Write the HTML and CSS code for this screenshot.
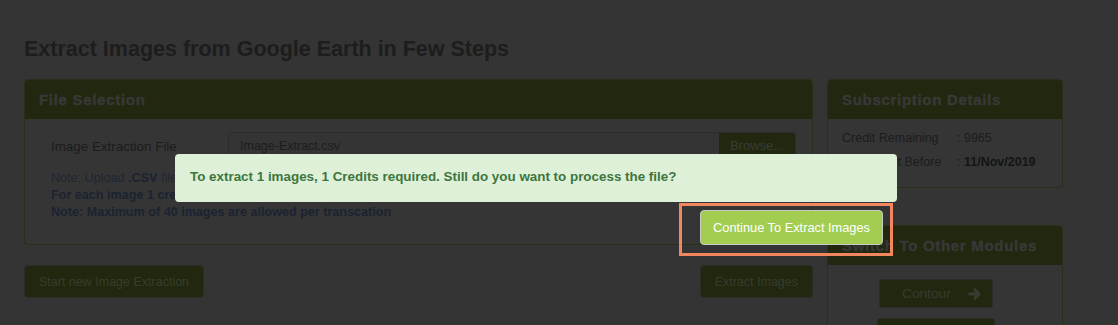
FILE: index.html
```html
<!DOCTYPE html>
<html lang="en">
<head>
<meta charset="utf-8">
<title>Extract Images</title>
<link rel="stylesheet" href="styles.css">
</head>
<body>
<div class="page">
  <h1 class="title">Extract Images from Google Earth in Few Steps</h1>
  <div class="layout">
    <main class="main-col">
      <section class="panel">
        <header class="panel-head">File Selection</header>
        <div class="file-body">
          <div class="file-row">
            <span class="file-label">Image Extraction File</span>
            <div class="file-input">
              <span class="file-name">Image-Extract.csv</span>
              <span class="browse">Browse...</span>
            </div>
          </div>
          <div class="notes">
            <p class="note">Note: Upload <b>.CSV</b> file format only.</p>
            <p class="note strong">For each image 1 credit will be deducted.</p>
            <p class="note strong">Note: Maximum of 40 images are allowed per transcation</p>
          </div>
        </div>
      </section>
      <div class="actions">
        <button class="btn">Start new Image Extraction</button>
        <button class="btn">Extract Images</button>
      </div>
    </main>
    <aside class="side-col">
      <section class="panel">
        <header class="panel-head">Subscription Details</header>
        <div class="sub-body">
          <span>Credit Remaining</span><span>: 9965</span>
          <span>Use Credit Before</span><span>: <b>11/Nov/2019</b></span>
        </div>
      </section>
      <section class="panel modules">
        <header class="panel-head">Switch To Other Modules</header>
        <div class="modules-body">
          <button class="mod-btn">Contour <svg class="arrow" viewBox="0 0 14 14" width="14" height="14"><path d="M1.5 7h9M6.8 2.6L11.2 7 6.8 11.4" fill="none" stroke="currentColor" stroke-width="2.8" stroke-linecap="round" stroke-linejoin="round"/></svg></button>
          <button class="mod-btn wide">Elevation <svg class="arrow" viewBox="0 0 14 14" width="14" height="14"><path d="M1.5 7h9M6.8 2.6L11.2 7 6.8 11.4" fill="none" stroke="currentColor" stroke-width="2.8" stroke-linecap="round" stroke-linejoin="round"/></svg></button>
        </div>
      </section>
    </aside>
  </div>
</div>

<div class="modal">
  <div class="modal-msg">To extract 1 images, 1 Credits required. Still do you want to process the file?</div>
  <div class="modal-foot">
    <div class="highlight">
      <button class="btn-continue">Continue To Extract Images</button>
    </div>
  </div>
</div>
</body>
</html>
```

FILE: styles.css
```css
* { box-sizing: border-box; }

html, body {
  margin: 0;
  padding: 0;
  background: #343434;
  font-family: "Liberation Sans", Arial, sans-serif;
  overflow: hidden;
}

.page {
  padding: 0 0 0 24px;
}

.title {
  margin: 37px 0 17px;
  font-size: 21.5px;
  line-height: 25px;
  font-weight: bold;
  color: #1d1d1d;
}

.layout {
  display: flex;
  gap: 14px;
  align-items: flex-start;
}

.main-col {
  width: 789px;
}

.side-col {
  width: 236px;
  display: flex;
  flex-direction: column;
  gap: 37px;
}

.panel {
  border: 1px solid #283015;
  border-radius: 4px;
  background: #353535;
  overflow: hidden;
}

.panel-head {
  height: 39px;
  line-height: 39px;
  padding-left: 14px;
  background: #21280f;
  color: #383838;
  font-size: 15px;
  font-weight: bold;
  letter-spacing: 0.7px;
  -webkit-text-stroke: 0.35px #383838;
}

/* File selection */
.file-body {
  padding: 13px 16px 23px 26px;
}

.file-row {
  display: flex;
  align-items: center;
}

.file-label {
  width: 177px;
  font-size: 13.4px;
  color: #1c1c1c;
}

.file-input {
  flex: 1;
  display: flex;
  height: 28px;
  border: 1px solid #2c2c2c;
  border-radius: 3px;
  overflow: hidden;
}

.file-name {
  flex: 1;
  padding-left: 11px;
  line-height: 26px;
  font-size: 12.5px;
  color: #1e1e1e;
  background: #343434;
}

.browse {
  width: 76px;
  text-align: center;
  line-height: 26px;
  font-size: 13px;
  color: #393c35;
  background: #21280f;
}

.notes {
  margin-top: 10px;
}

.note {
  margin: 0;
  font-size: 12.6px;
  line-height: 17px;
  color: #1f2733;
}

.note b,
.note.strong {
  font-weight: bold;
  color: #1b2332;
}

.actions {
  display: flex;
  justify-content: space-between;
  margin-top: 20px;
}

.btn {
  height: 33px;
  padding: 0 14px;
  border: 1px solid #2a2d25;
  border-radius: 4px;
  background: #21280f;
  color: #373d2e;
  font-family: "Liberation Sans", Arial, sans-serif;
  font-size: 12.5px;
}

/* Subscription */
.sub-body {
  display: grid;
  grid-template-columns: 115px auto;
  padding: 8px 14px 13px 14px;
  font-size: 12.5px;
  line-height: 23.5px;
  color: #1c1c1c;
}

.sub-body b {
  color: #141414;
}

/* Modules */
.modules-body {
  display: flex;
  flex-direction: column;
  align-items: center;
  gap: 10px;
  padding: 14px 18px 14px 0;
}

.mod-btn {
  display: flex;
  align-items: center;
  width: 114px;
  height: 29px;
  padding: 0 10px 0 22px;
  border: 1px solid #2a2d25;
  border-radius: 3px;
  background: #21280f;
  color: #383c30;
  font-family: "Liberation Sans", Arial, sans-serif;
  font-size: 13.7px;
}

.mod-btn.wide {
  width: 118px;
}

.arrow {
  margin-left: auto;
  color: #383b34;
}

/* Modal (over the page) */
.modal {
  position: absolute;
  left: 175px;
  top: 154px;
  width: 722px;
}

.modal-msg {
  height: 47.5px;
  line-height: 46px;
  padding-left: 15px;
  background: #dff0d8;
  border-radius: 4px;
  color: #3c763d;
  font-size: 13.4px;
  font-weight: bold;
}

.modal-foot {
  display: flex;
  justify-content: flex-end;
  padding-right: 4px;
  margin-top: 1px;
}

.highlight {
  border: 3px solid #f2865e;
  padding: 4px 7px 8px 18px;
}

.btn-continue {
  display: block;
  height: 35px;
  padding: 0 12px;
  border: 1px solid #c8cbc2;
  border-radius: 4px;
  background: #a2cd50;
  color: #ffffff;
  font-family: "Liberation Sans", Arial, sans-serif;
  font-size: 12.8px;
}
```
